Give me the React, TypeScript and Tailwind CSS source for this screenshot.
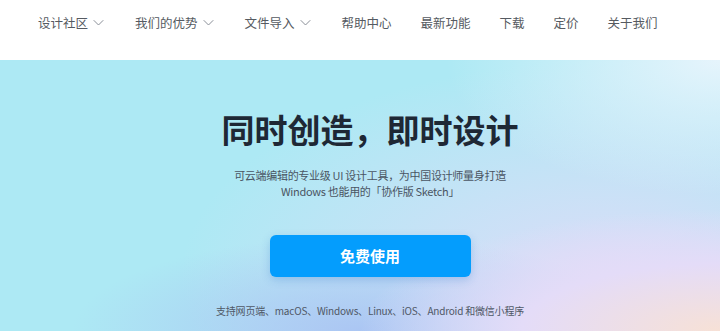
import React from 'react';

const navItems: { label: string; menu?: boolean }[] = [
  { label: '设计社区', menu: true },
  { label: '我们的优势', menu: true },
  { label: '文件导入', menu: true },
  { label: '帮助中心' },
  { label: '最新功能' },
  { label: '下载' },
  { label: '定价' },
  { label: '关于我们' },
];

const Chevron: React.FC = () => (
  <svg width="13" height="8" viewBox="0 0 13 8" fill="none" className="ml-[5px]">
    <path d="M1 1.5l4.5 4.5L10 1.5" stroke="#8a8f98" strokeWidth="1" strokeLinecap="round" strokeLinejoin="round" />
  </svg>
);

const App: React.FC = () => {
  return (
    <div className="w-[720px] h-[331px] overflow-hidden font-['Noto_Sans_CJK_SC','Noto_Sans',sans-serif]">
      <header className="h-[60px] bg-white flex items-center pl-[38px] pb-[14px]">
        <nav className="flex items-center gap-[29px]">
          {navItems.map((item) => (
            <a key={item.label} href="#" className="flex items-center text-[12.5px] text-[#555a61]">
              <span>{item.label}</span>
              {item.menu && <Chevron />}
            </a>
          ))}
        </nav>
      </header>

      <section className="h-[271px] pl-[20px] flex flex-col items-center bg-[radial-gradient(ellipse_50%_45%_at_100%_100%,#f7e1d6_0%,#e4dcf8_55%,transparent_100%),radial-gradient(ellipse_38%_50%_at_100%_0%,#e6f4fc_0%,transparent_100%),radial-gradient(ellipse_40%_35%_at_50%_100%,#abc6f3_0%,transparent_100%),radial-gradient(ellipse_60%_80%_at_85%_80%,#dcdcf8_0%,transparent_100%),linear-gradient(#ade9f4,#ade9f4)]">
        <h1 className="pt-[49px] text-[33px] leading-[40px] font-bold text-[#1e2835]">同时创造，即时设计</h1>
        <p className="mt-[18px] text-[11px] leading-[16px] tracking-[-0.3px] text-[#4a5563] text-center">
          可云端编辑的专业级 UI 设计工具，为中国设计师量身打造
          <br />
          Windows 也能用的「协作版 Sketch」
        </p>
        <button className="mt-[36px] w-[201px] h-[42px] rounded-[6px] bg-[#049dfd] text-white text-[15px] font-bold shadow-[0_3px_8px_rgba(40,110,200,0.25)]">
          免费使用
        </button>
        <p className="mt-[26px] text-[10px] leading-[16px] tracking-[-0.2px] text-[#4f5866]">
          支持网页端、macOS、Windows、Linux、iOS、Android 和微信小程序
        </p>
      </section>
    </div>
  );
};

export default App;
